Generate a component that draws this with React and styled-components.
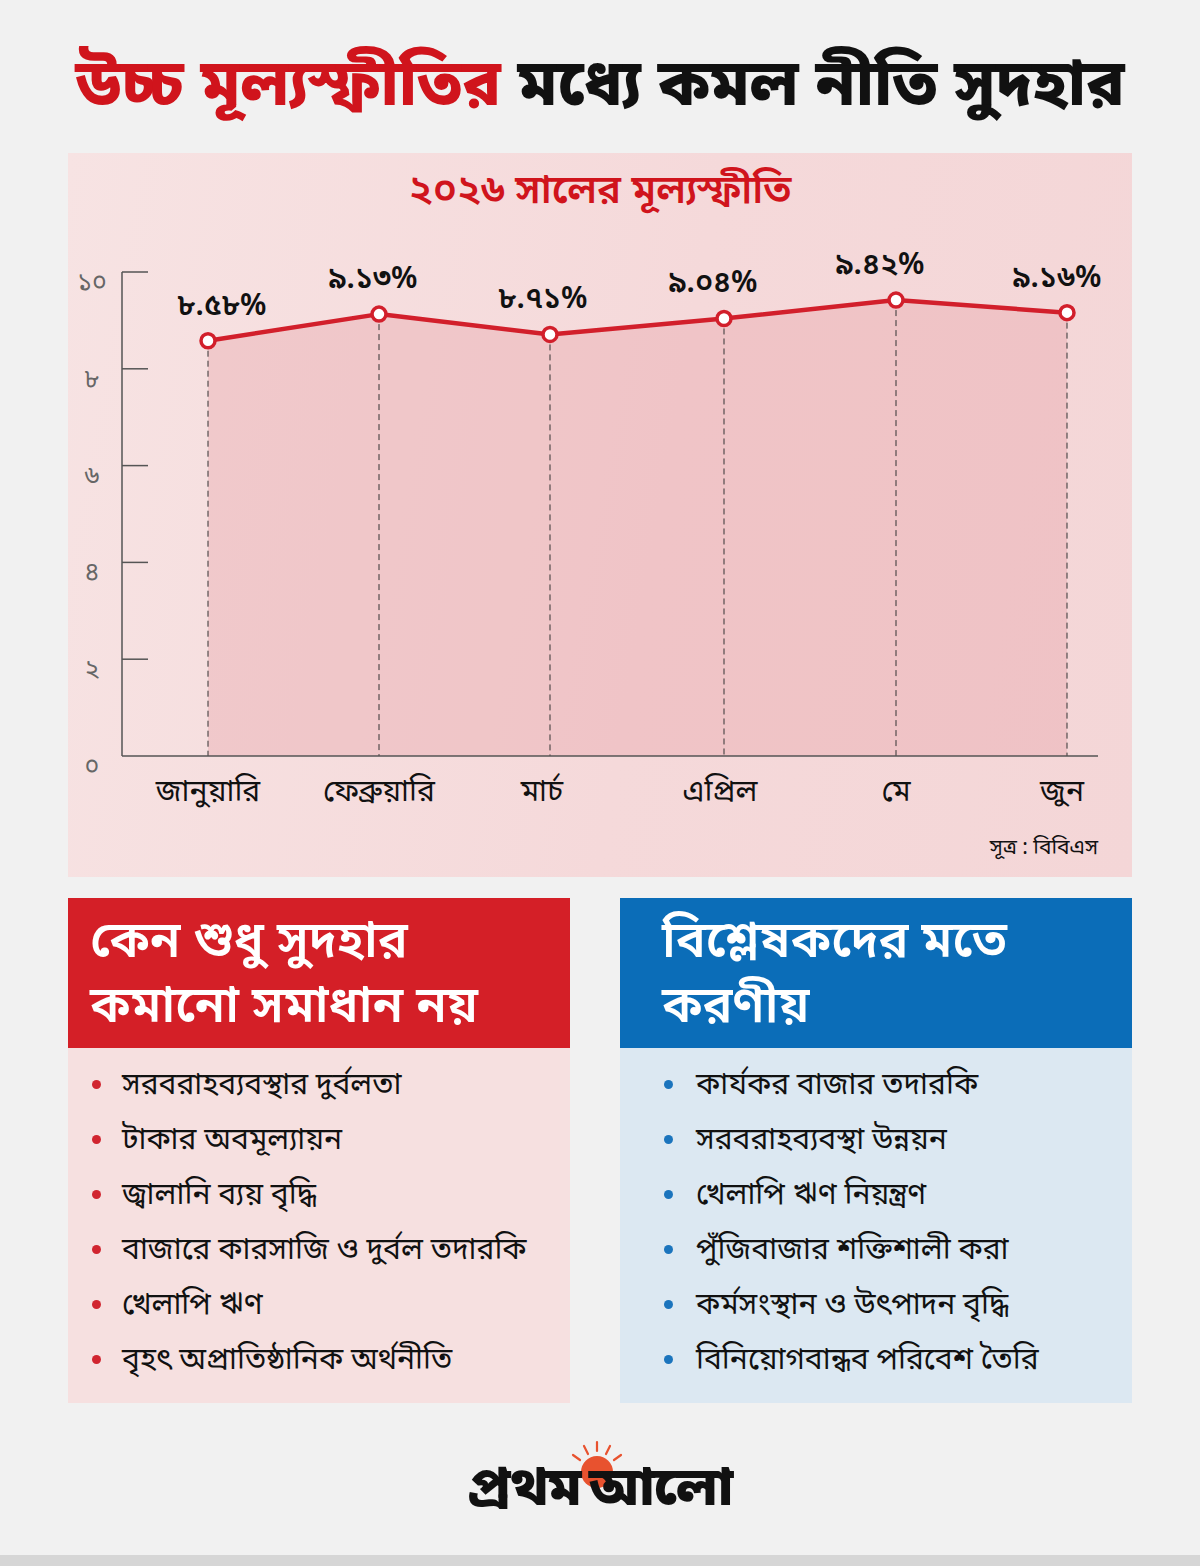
import React from 'react';
import styled, { createGlobalStyle } from 'styled-components';

const BN = `"Noto Sans Bengali", "Noto Serif Bengali", "Lohit Bengali", "Mukti", "Kalpurush", "SolaimanLipi", "FreeSans", "FreeSerif", "Noto Sans", sans-serif`;

const GlobalStyle = createGlobalStyle`
    html, body {
        margin: 0;
        padding: 0;
        background: #f1f1f1;
    }
    body {
        font-family: ${BN};
        color: #111;
    }
`;

const points = [
    { month: 'জানুয়ারি', value: 8.58, label: '৮.৫৮%', mx: 140 },
    { month: 'ফেব্রুয়ারি', value: 9.13, label: '৯.১৩%', mx: 311 },
    { month: 'মার্চ', value: 8.71, label: '৮.৭১%', mx: 474 },
    { month: 'এপ্রিল', value: 9.04, label: '৯.০৪%', mx: 652 },
    { month: 'মে', value: 9.42, label: '৯.৪২%', mx: 828 },
    { month: 'জুন', value: 9.16, label: '৯.১৬%', mx: 994 },
];
const xs = [140, 311, 482, 656, 828, 999];
const labelX = [154, 305, 475, 645, 812, 989];
const yTicks = [
    { v: 0, t: '০' },
    { v: 2, t: '২' },
    { v: 4, t: '৪' },
    { v: 6, t: '৬' },
    { v: 8, t: '৮' },
    { v: 10, t: '১০' },
];
const AXIS_X = 54;
const BASE_Y = 541;
const UNIT = 48.4;
const yOf = (v) => BASE_Y - v * UNIT;

const reasons = [
    'সরবরাহব্যবস্থার দুর্বলতা',
    'টাকার অবমূল্যায়ন',
    'জ্বালানি ব্যয় বৃদ্ধি',
    'বাজারে কারসাজি ও দুর্বল তদারকি',
    'খেলাপি ঋণ',
    'বৃহৎ অপ্রাতিষ্ঠানিক অর্থনীতি',
];

const actions = [
    'কার্যকর বাজার তদারকি',
    'সরবরাহব্যবস্থা উন্নয়ন',
    'খেলাপি ঋণ নিয়ন্ত্রণ',
    'পুঁজিবাজার শক্তিশালী করা',
    'কর্মসংস্থান ও উৎপাদন বৃদ্ধি',
    'বিনিয়োগবান্ধব পরিবেশ তৈরি',
];

const InflationChart = () => {
    const line = points.map((p, i) => `${xs[i]},${yOf(p.value)}`).join(' ');
    const area = `${xs[0]},${BASE_Y} ${line} ${xs[5]},${BASE_Y}`;
    return (
        <ChartSvg width="1064" height="605" viewBox="0 0 1064 605">
            <polygon points={area} fill="#e7a3a8" fillOpacity="0.38" />
            {points.map((p, i) => (
                <line
                    key={`d${i}`}
                    x1={xs[i]}
                    x2={xs[i]}
                    y1={yOf(p.value)}
                    y2={BASE_Y}
                    stroke="#333"
                    strokeWidth="1"
                    strokeDasharray="6 4"
                />
            ))}
            <line x1={AXIS_X} x2={AXIS_X} y1={yOf(10)} y2={BASE_Y} stroke="#555" strokeWidth="1.5" />
            <line x1={AXIS_X} x2={1030} y1={BASE_Y} y2={BASE_Y} stroke="#555" strokeWidth="1.5" />
            {yTicks.map((t) => (
                <g key={t.v}>
                    {t.v > 0 && (
                        <line x1={AXIS_X} x2={AXIS_X + 26} y1={yOf(t.v)} y2={yOf(t.v)} stroke="#555" strokeWidth="1.5" />
                    )}
                    <text x={24} y={yOf(t.v) + 18} textAnchor="middle" fontSize="25" fill="#666" fontFamily={BN}>
                        {t.t}
                    </text>
                </g>
            ))}
            <polyline points={line} fill="none" stroke="#d21f2b" strokeWidth="4.5" strokeLinejoin="round" />
            {points.map((p, i) => (
                <g key={`p${i}`}>
                    <circle cx={xs[i]} cy={yOf(p.value)} r="7" fill="#fff" stroke="#d21f2b" strokeWidth="3.5" />
                    <text
                        x={labelX[i]}
                        y={yOf(p.value) - 26}
                        textAnchor="middle"
                        fontSize="30"
                        fontWeight="600"
                        fill="#111"
                        fontFamily={BN}
                    >
                        {p.label}
                    </text>
                    <text x={p.mx} y={586} textAnchor="middle" fontSize="30" fill="#111" fontFamily={BN}>
                        {p.month}
                    </text>
                </g>
            ))}
        </ChartSvg>
    );
};

const InfoBox = ({ tone, title, items }) => (
    <Box tone={tone}>
        <BoxHeader tone={tone}>
            {title.map((l, i) => (
                <span key={i}>{l}</span>
            ))}
        </BoxHeader>
        <BoxList>
            {items.map((item, i) => (
                <BoxItem key={i} tone={tone}>
                    {item}
                </BoxItem>
            ))}
        </BoxList>
    </Box>
);

const App = () => (
    <>
        <GlobalStyle />
        <Page>
            <Title>
                <Red>উচ্চ মূল্যস্ফীতির</Red> মধ্যে কমল নীতি সুদহার
            </Title>
            <ChartPanel>
                <ChartTitle>২০২৬ সালের মূল্যস্ফীতি</ChartTitle>
                <InflationChart />
                <Source>সূত্র : বিবিএস</Source>
            </ChartPanel>
            <Boxes>
                <InfoBox tone="red" title={['কেন শুধু সুদহার', 'কমানো সমাধান নয়']} items={reasons} />
                <InfoBox tone="blue" title={['বিশ্লেষকদের মতে', 'করণীয়']} items={actions} />
            </Boxes>
            <Footer>
                <Logo>
                    <Sun width="70" height="50" viewBox="0 0 70 50">
                        <g stroke="#e8522f" strokeWidth="2.2" strokeLinecap="round">
                            <line x1="35" y1="3" x2="35" y2="12" />
                            <line x1="22" y1="7" x2="26" y2="15" />
                            <line x1="48" y1="7" x2="44" y2="15" />
                            <line x1="11" y1="16" x2="18" y2="21" />
                            <line x1="59" y1="16" x2="52" y2="21" />
                        </g>
                        <circle cx="35" cy="33" r="16" fill="#e8522f" />
                    </Sun>
                    <LogoWord>প্রথম</LogoWord>
                    <LogoWord>আলো</LogoWord>
                </Logo>
            </Footer>
            <BottomStrip />
        </Page>
    </>
);

export default App;

const Page = styled.div`
    width: 1200px;
    height: 1566px;
    display: flex;
    flex-direction: column;
    align-items: center;
    background: #f1f1f1;
    overflow: hidden;
`;

const Title = styled.h1`
    margin: 0;
    flex: none;
    padding-top: 48px;
    height: 153px;
    box-sizing: border-box;
    font-size: 64px;
    line-height: 82px;
    font-weight: 800;
    color: #111;
    text-align: center;
    white-space: nowrap;
`;

const Red = styled.span`
    color: #d0141c;
`;

const ChartPanel = styled.section`
    width: 1064px;
    height: 724px;
    flex: none;
    display: flex;
    flex-direction: column;
    background: linear-gradient(100deg, #f7e3e3 0%, #f5d9da 55%, #f4d6d7 100%);
    box-sizing: border-box;
    padding-top: 18px;
`;

const ChartTitle = styled.h2`
    margin: 0;
    height: 44px;
    font-size: 40px;
    line-height: 44px;
    font-weight: 600;
    color: #d0141c;
    text-align: center;
`;

const ChartSvg = styled.svg`
    display: block;
    flex: none;
`;

const Source = styled.div`
    flex: 1;
    display: flex;
    align-items: center;
    justify-content: flex-end;
    padding-right: 34px;
    font-size: 21px;
    color: #111;
`;

const Boxes = styled.div`
    margin-top: 21px;
    width: 1064px;
    flex: none;
    display: grid;
    grid-template-columns: 502px 512px;
    column-gap: 50px;
`;

const Box = styled.div`
    display: flex;
    flex-direction: column;
    height: 505px;
    background: ${(p) => (p.tone === 'red' ? '#f6e0e0' : '#dce8f2')};
`;

const BoxHeader = styled.div`
    height: 150px;
    box-sizing: border-box;
    padding: 14px 22px 0;
    display: flex;
    flex-direction: column;
    background: ${(p) => (p.tone === 'red' ? '#d41f27' : '#0b6db8')};
    color: #fff;
    font-size: 50px;
    line-height: 65px;
    font-weight: 600;
    padding-left: ${(p) => (p.tone === 'red' ? '22px' : '42px')};
`;

const BoxList = styled.ul`
    list-style: none;
    margin: 0;
    padding: 10px 0 0;
`;

const BoxItem = styled.li`
    height: 55px;
    display: flex;
    align-items: center;
    padding-left: ${(p) => (p.tone === 'red' ? '54px' : '76px')};
    position: relative;
    font-size: 30px;
    color: #111;
    &::before {
        content: '';
        position: absolute;
        left: ${(p) => (p.tone === 'red' ? '24px' : '44px')};
        top: 50%;
        width: 9px;
        height: 9px;
        margin-top: -6px;
        border-radius: 50%;
        background: ${(p) => (p.tone === 'red' ? '#d12530' : '#1b74bd')};
    }
`;

const Footer = styled.div`
    flex: 1;
    display: flex;
    align-items: center;
    justify-content: center;
    padding-top: 14px;
`;

const Logo = styled.div`
    position: relative;
    display: flex;
    align-items: flex-end;
    gap: 8px;
    padding-top: 10px;
`;

const LogoWord = styled.span`
    position: relative;
    z-index: 1;
    font-size: 54px;
    line-height: 60px;
    font-weight: 900;
    color: #111;
    letter-spacing: -1px;
`;

const Sun = styled.svg`
    position: absolute;
    left: 50%;
    top: -12px;
    margin-left: -38px;
`;

const BottomStrip = styled.div`
    width: 100%;
    height: 11px;
    flex: none;
    background: #d6d6d6;
`;
